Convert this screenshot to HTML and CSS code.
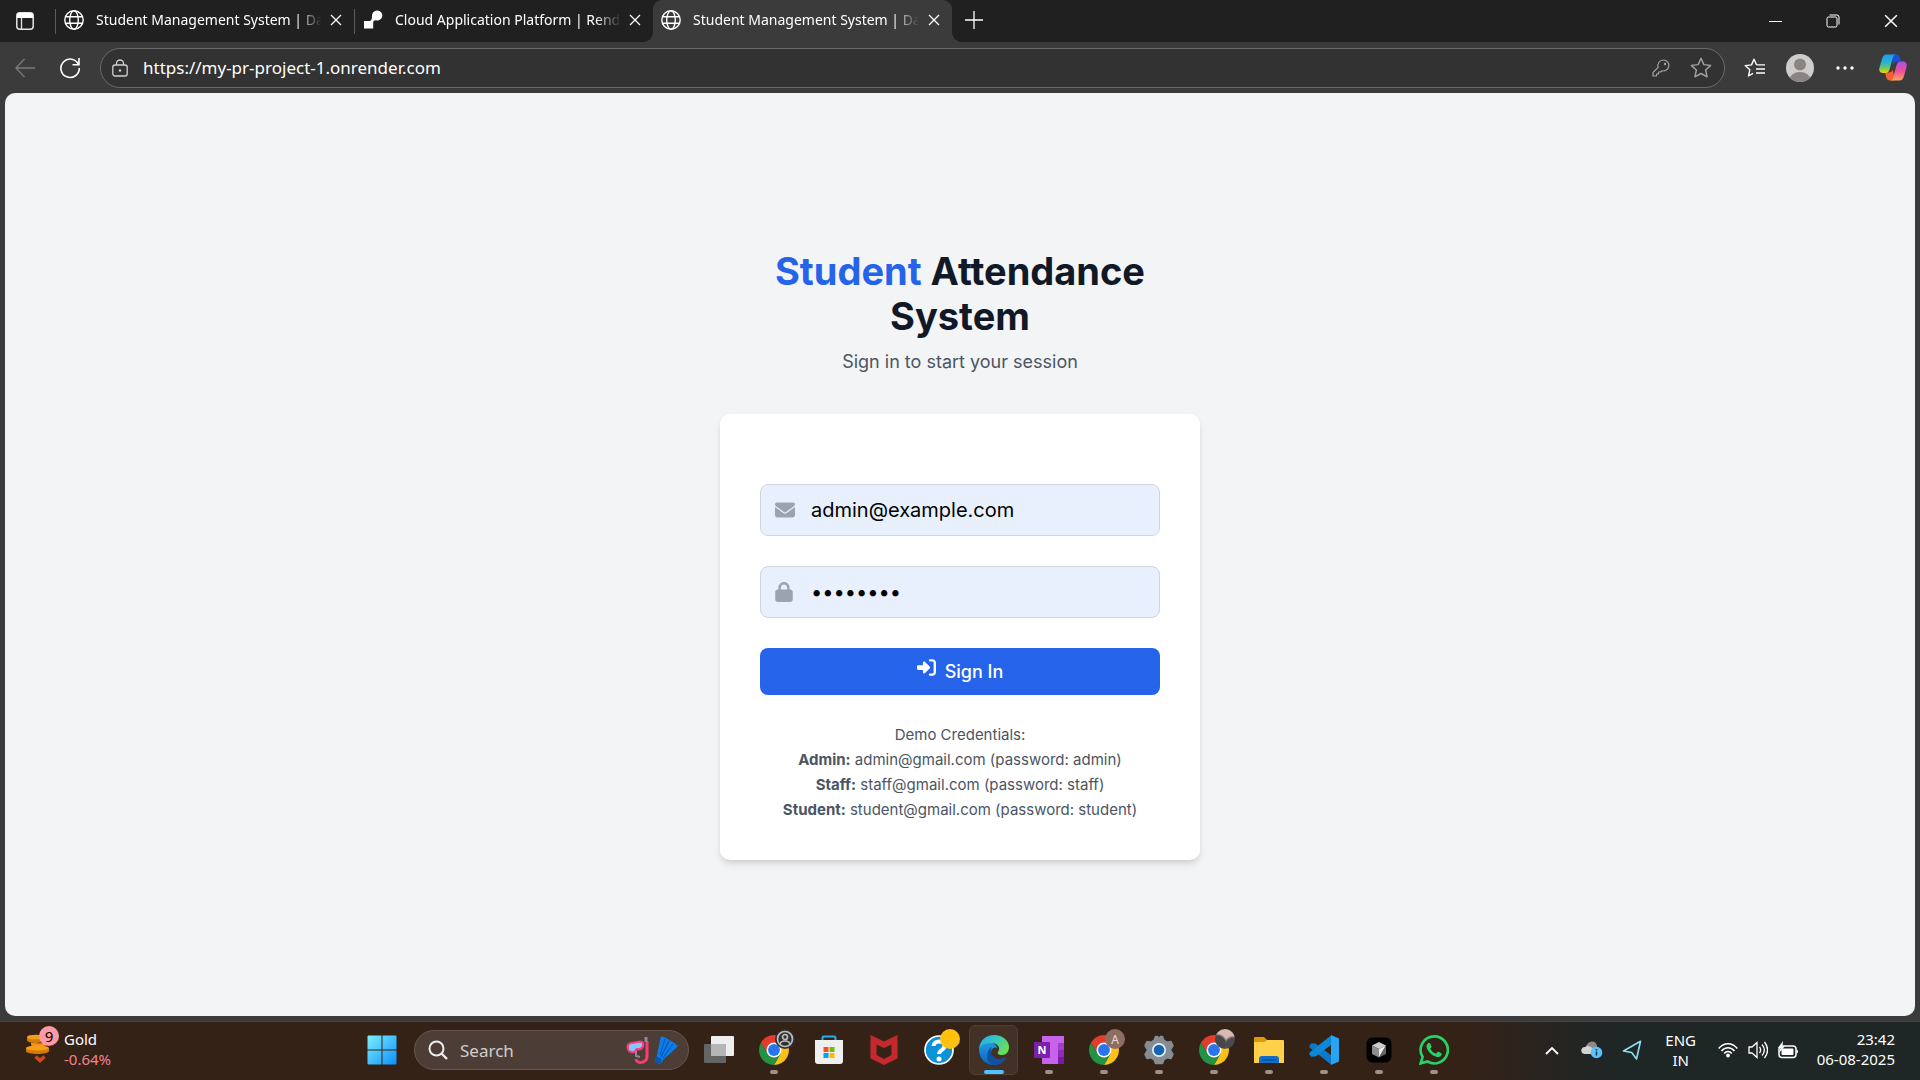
FILE: index.html
```html
<!DOCTYPE html>
<html lang="en">
<head>
<meta charset="utf-8">
<title>Student Management System</title>
<link rel="stylesheet" href="styles.css">
</head>
<body>
<svg class="defs" aria-hidden="true">
  <symbol id="globe" viewBox="0 0 20 20"><g fill="none" stroke="currentColor" stroke-width="1.4"><circle cx="10" cy="10" r="9.2"/><ellipse cx="10" cy="10" rx="4.3" ry="9.2"/><path d="M1.6 6.8h16.8M1.6 13.2h16.8"/></g></symbol>
  <symbol id="cross" viewBox="0 0 12 12"><path d="M1 1l10 10M11 1L1 11" fill="none" stroke="currentColor" stroke-width="1.3"/></symbol>
  <symbol id="chrome" viewBox="2 2 44 44"><path fill="#fbc116" d="M24 13h19.05A22 22 0 0 1 24 46l9.53-16.5z"/><path fill="#e33b2e" d="M4.95 13a22 22 0 0 1 38.1 0H24l-9.53 16.5z"/><path fill="#229342" d="M4.95 13l9.52 16.5h19.06L24 46A22 22 0 0 1 4.95 13z"/><circle cx="24" cy="24" r="11" fill="#fff"/><circle cx="24" cy="24" r="8.7" fill="#2a75ee"/></symbol>
  <symbol id="star" viewBox="0 0 20 20"><path d="M10 1.2l2.6 5.7 6.2.7-4.6 4.2 1.3 6.2L10 15l-5.5 3 1.3-6.2L1.2 7.600l6.200-.7z" fill="none" stroke="currentColor" stroke-width="1.3" stroke-linejoin="round"/></symbol>
</svg>

<div class="window">
  <header class="tabbar">
    <button class="tab-actions" aria-label="Tab actions"><svg width="18" height="18" viewBox="0 0 18 18"><rect x=".8" y=".8" width="16.400" height="16.400" rx="3" fill="none" stroke="#e6e6e6" stroke-width="1.500"/><path d="M1 3a2 2 0 0 1 2-2h12a2 2 0 0 1 2 2v3H1z" fill="#fff"/><path d="M5.500 6v11" stroke="#e6e6e6" stroke-width="1.300"/></svg></button>
    <div class="tab"><svg class="favicon"><use href="#globe"/></svg><span class="tab-title">Student Management System | Dashboard</span><button class="tab-close" aria-label="Close tab"><svg width="12" height="12"><use href="#cross"/></svg></button></div>
    <div class="tab"><svg class="favicon" viewBox="0 0 20 20"><path fill="#fff" d="M14 .5a5 5 0 1 1-1 9.800c-2 0-2.800.7-2.800 2.700v5.500H1V11h5.500C8.500 11 9 8.500 9 6a5 5 0 0 1 5-5.500z"/></svg><span class="tab-title">Cloud Application Platform | Render</span><button class="tab-close" aria-label="Close tab"><svg width="12" height="12"><use href="#cross"/></svg></button></div>
    <div class="tab active"><svg class="favicon"><use href="#globe"/></svg><span class="tab-title">Student Management System | Dashboard</span><button class="tab-close" aria-label="Close tab"><svg width="12" height="12"><use href="#cross"/></svg></button></div>
    <button class="new-tab" aria-label="New tab"><svg width="18" height="18" viewBox="0 0 18 18"><path d="M9 0v18M0 9h18" stroke="#fff" stroke-width="1.300"/></svg></button>
    <div class="controls">
      <button aria-label="Minimize"><svg width="13" height="13"><path d="M0 6.500h13" stroke="#fff"/></svg></button>
      <button aria-label="Restore"><svg width="14" height="14" viewBox="0 0 14 14"><g fill="none" stroke="#fff"><rect x="1" y="3" width="10" height="10" rx="1.500"/><path d="M3.500 1H11a2 2 0 0 1 2 2v7.500"/></g></svg></button>
      <button aria-label="Close"><svg width="14" height="14"><use href="#cross"/></svg></button>
    </div>
  </header>

  <div class="toolbar">
    <button class="tool back" aria-label="Back"><svg width="20" height="20" viewBox="0 0 20 20"><path d="M20 10H1M9.500 1L1 10l8.500 9" fill="none" stroke="currentColor" stroke-width="1.300"/></svg></button>
    <button class="tool" aria-label="Refresh"><svg width="22" height="22" viewBox="0 0 22 22"><path d="M19.500 7.500A9.200 9.200 0 1 0 20.300 11M20 1v6.700h-6.500" fill="none" stroke="currentColor" stroke-width="1.600"/></svg></button>
    <div class="address">
      <svg width="16" height="18" viewBox="0 0 16 18"><g fill="none" stroke="#d0d0d0" stroke-width="1.300"><rect x=".8" y="6" width="14.400" height="11" rx="2.200"/><path d="M4.500 6V4.500a3.500 3.500 0 0 1 7 0V6"/></g><circle cx="8" cy="11.500" r="1.200" fill="#d0d0d0"/></svg>
      <input class="url" aria-label="Address" value="https://my-pr-project-1.onrender.com">
      <button class="pill-tool" aria-label="Saved passwords"><svg width="18" height="18" viewBox="0 0 18 18"><path d="M11.500 1A5.500 5.500 0 0 0 6.200 8.300L1 13.500V17h3.500v-2h2v-2h2l1.400-1.200A5.500 5.500 0 1 0 11.500 1z" fill="none" stroke="currentColor" stroke-width="1.200" stroke-linejoin="round"/><circle cx="13" cy="5" r="1.200" fill="currentColor"/></svg></button>
      <button class="pill-tool" aria-label="Add to favorites"><svg width="22" height="22"><use href="#star"/></svg></button>
    </div>
    <button class="tool fav" aria-label="Favorites"><svg width="22" height="20" viewBox="0 0 22 20"><path d="M12.500 6.800L10 1.200 7.500 6.900l-6.300.7 4.600 4.200L4.500 18l4.500-2.600M12.500 6.900H21M12 11h9M12 15h9" fill="none" stroke="currentColor" stroke-width="1.400" stroke-linejoin="round"/></svg></button>
    <button class="tool" aria-label="Profile"><svg width="28" height="28" viewBox="0 0 28 28"><clipPath id="av"><circle cx="14" cy="14" r="14"/></clipPath><g clip-path="url(#av)"><path fill="#cfcdcb" d="M0 0h28v28H0z"/><circle cx="14" cy="10.500" r="6" fill="#8a8583"/><ellipse cx="14" cy="26" rx="10.500" ry="8" fill="#8a8583"/></g></svg></button>
    <button class="tool" aria-label="Settings and more"><svg width="18" height="4"><g fill="#fff"><circle cx="2" cy="2" r="1.700"/><circle cx="9" cy="2" r="1.700"/><circle cx="16" cy="2" r="1.700"/></g></svg></button>
    <button class="tool copilot" aria-label="Copilot"><svg width="28" height="27" viewBox="0 0 28 27">
      <linearGradient id="ca" x1="0" y1="0" x2="0" y2="1"><stop offset="0" stop-color="#1b9cf0"/><stop offset=".5" stop-color="#2fb7c8"/><stop offset=".75" stop-color="#7cc850"/><stop offset="1" stop-color="#f3d20c"/></linearGradient>
      <linearGradient id="cb" x1="0" y1="0" x2="0" y2="1"><stop offset="0" stop-color="#a552ec"/><stop offset=".5" stop-color="#ee4f9a"/><stop offset="1" stop-color="#fba35e"/></linearGradient>
      <path fill="#1a4fd8" d="M12 .5h5c2.500 0 3.200 1.500 4 4l.8 3h-3.500c-2.500 0-3.300 1-4 3.500z"/><path fill="#f4622f" d="M16 26.500h-5c-2.500 0-3.200-1.500-4-4l-.8-4h3.500c2.500 0 3.300-1 4-3z"/>
      <path fill="url(#ca)" d="M7.500.5H17c-2 0-2.700 1.500-3.400 4L10.700 15c-.8 2.500-1.700 4-4.200 4H4c-3 0-4.500-2-3.500-5.500L3 5C4 2 5 .5 7.500.5z"/><path fill="url(#cb)" d="M20.500 26.500H11c2 0 2.700-1.500 3.400-4L17.300 12c.8-2.500 1.700-4.500 4.200-4.500H24c3 0 4.500 2 3.500 5.500L25 22c-1 3-2 4.500-4.500 4.500z"/></svg></button>
  </div>

  <main class="page">
    <div class="login">
      <h1><span>Student</span> Attendance System</h1>
      <p class="lead">Sign in to start your session</p>
      <form class="card">
        <label class="field"><svg width="20" height="20" viewBox="0 0 512 512"><path fill="currentColor" d="M48 64C21.500 64 0 85.500 0 112c0 15.100 7.100 29.300 19.200 38.400L236.800 313.600c11.400 8.500 27 8.500 38.400 0L492.800 150.400c12.100-9.100 19.200-23.300 19.200-38.400c0-26.500-21.500-48-48-48H48zM0 176V384c0 35.300 28.700 64 64 64H448c35.300 0 64-28.700 64-64V176L294.400 339.200c-22.800 17.100-54 17.100-76.800 0L0 176z"/></svg><input type="email" aria-label="Email" value="admin@example.com"></label>
        <label class="field"><svg width="18" height="20" viewBox="0 0 448 512"><path fill="currentColor" d="M144 144v48H304V144c0-44.200-35.800-80-80-80s-80 35.800-80 80zM80 192V144C80 64.500 144.500 0 224 0s144 64.500 144 144v48h16c35.300 0 64 28.700 64 64V448c0 35.300-28.700 64-64 64H64c-35.300 0-64-28.700-64-64V256c0-35.300 28.700-64 64-64H80z"/></svg><input type="password" aria-label="Password" value="password"></label>
        <button type="button" class="sign-in"><svg width="19" height="19" viewBox="0 0 512 512"><path fill="currentColor" d="M217.900 105.900L340.700 228.700c7.200 7.200 11.300 17.100 11.300 27.300s-4.100 20.100-11.300 27.300L217.900 406.100c-6.400 6.400-15 9.900-24 9.900c-18.700 0-33.900-15.200-33.900-33.900l0-62.100L32 320c-17.700 0-32-14.300-32-32l0-64c0-17.700 14.300-32 32-32l128 0 0-62.100c0-18.700 15.200-33.900 33.900-33.900c9 0 17.600 3.600 24 9.900zM352 416l64 0c17.700 0 32-14.300 32-32l0-256c0-17.700-14.300-32-32-32l-64 0c-17.700 0-32-14.300-32-32s14.300-32 32-32l64 0c53 0 96 43 96 96l0 256c0 53-43 96-96 96l-64 0c-17.700 0-32-14.300-32-32s14.300-32 32-32z"/></svg>Sign In</button>
        <div class="demo">
          <p>Demo Credentials:</p>
          <p><strong>Admin:</strong> admin@gmail.com (password: admin)</p>
          <p><strong>Staff:</strong> staff@gmail.com (password: staff)</p>
          <p><strong>Student:</strong> student@gmail.com (password: student)</p>
        </div>
      </form>
    </div>
  </main>
</div>

<footer class="taskbar">
  <button class="widget">
    <span class="coins"><svg width="24" height="30" viewBox="0 0 24 30"><g fill="#d47a08"><path d="M1 3v3c0 4 16 4 18 0V3z"/><path d="M5 9v2c0 3 14 3 16 0V9z"/><path d="M0 14v3c0 4 23 4 23 0v-3z"/></g><g fill="#f79d17"><ellipse cx="10" cy="3" rx="9" ry="2.300"/><path d="M5 8.500c5 2.500 12 2.500 16 0v1.500c-3 2.500-13 2.500-16 0z"/><ellipse cx="11.500" cy="14" rx="11.500" ry="2.600"/></g><path d="M9.500 22.500l4.500 4 4.500-4" fill="none" stroke="#cf4a18" stroke-width="3.600"/></svg><span class="count">9</span></span>
    <span class="quote">Gold<span class="loss">-0.64%</span></span>
  </button>

  <nav class="apps">
    <button class="app" aria-label="Start"><svg width="30" height="30" viewBox="0 0 30 30"><linearGradient id="win" x1="0" y1="0" x2="1" y2="1"><stop offset="0" stop-color="#7cf0ff"/><stop offset="1" stop-color="#0c8ffc"/></linearGradient><path fill="url(#win)" d="M1.500.5h13v14H.5v-13a1 1 0 0 1 1-1zM15.500.5h13a1 1 0 0 1 1 1v13h-14zM.5 15.500h14v14h-13a1 1 0 0 1-1-1zM15.500 15.500h14v13a1 1 0 0 1-1 1h-13z"/></svg></button>
    <label class="search">
      <svg width="20" height="20" viewBox="0 0 20 20"><g fill="none" stroke="#ececec" stroke-width="2"><circle cx="8.500" cy="8.500" r="7"/><path d="M13.500 13.500L19 19" stroke-width="2.400"/></g></svg>
      <input type="text" aria-label="Search" placeholder="Search">
      <svg width="52" height="28" viewBox="0 0 52 28"><path d="M21 5v15c0 8-11 8-11 3" fill="none" stroke="#fb3a78" stroke-width="3"/><path d="M20 1v5" stroke="#8e86a8" stroke-width="3"/><path d="M5 7l9-1.500c3 0 4 2 3 5-1 2-3 3-5 3-1-1-2 0-2 1-2 3-7 2-8-1-1-4 0-6 3-6.500z" fill="#87c5fb" stroke="#fb3a78" stroke-width="2.200"/><path d="M10 15v5l4 1" stroke="#8d8799" stroke-width="2" fill="none"/><path fill="#0b7eea" d="M35 0l5 2 3 2 4 2 5 4-14 13-3 4c-2 2-6 0-6-3l2-5z"/><path d="M39 3l-5 16M43 5l-8 16M47 8L37 22" stroke="#0556b8" stroke-width="1.200"/><path fill="#0a54ad" d="M30 20l6 3-1 3c-2 3-7 1-6-2z"/></svg>
    </label>
    <button class="app" aria-label="Task view"><svg width="30" height="30" viewBox="0 0 30 30"><rect x="0" y="9" width="22" height="19" rx="1" fill="#646464"/><rect x="7" y="1" width="23" height="20" rx="1" fill="#eee"/><path fill="#b5b5b5" d="M7 9h15v12H7z"/></svg></button>
    <button class="app open" aria-label="Chrome"><svg width="30" height="30"><use href="#chrome"/></svg><span class="badge dark"><svg width="18" height="18" viewBox="0 0 18 18"><g fill="none" stroke="#bdbdbd" stroke-width="1.700"><circle cx="9" cy="9" r="7.500"/><circle cx="9" cy="7" r="2.500"/><path d="M4 14c1-4 9-4 10 0"/></g></svg></span></button>
    <button class="app" aria-label="Microsoft Store"><svg width="30" height="30" viewBox="0 0 30 30"><path d="M8.500 6V3a1.500 1.500 0 0 1 1.500-1.500h10A1.500 1.500 0 0 1 21.500 3v3" fill="none" stroke="#23b1ee" stroke-width="2"/><path fill="#efefef" d="M1 5h28v21a3 3 0 0 1-3 3H4a3 3 0 0 1-3-3z"/><path fill="#f25022" d="M9.500 12h5v5h-5z"/><path fill="#7fba00" d="M15.500 12h5v5h-5z"/><path fill="#00a4ef" d="M9.500 18h5v5h-5z"/><path fill="#ffb900" d="M15.500 18h5v5h-5z"/></svg></button>
    <button class="app" aria-label="McAfee"><svg width="28" height="30" viewBox="0 0 28 30"><path fill="#c5282d" fill-rule="evenodd" d="M.5 0L14 6.500 27.500 0v23.500L14 30 .5 23.500zM6.500 9.500v10.500l7.500 4 7.500-4V9.500L14 13z"/></svg></button>
    <button class="app" aria-label="Help"><svg width="30" height="30" viewBox="0 0 30 30"><circle cx="15" cy="15" r="14" fill="#0b93d8" stroke="#fff" stroke-width="1.700"/><path d="M9.500 11c0-6 11-6 11 0 0 4-5.500 4-5.500 8" fill="none" stroke="#fff" stroke-width="4"/><circle cx="15" cy="24" r="2.500" fill="#fff"/></svg><span class="badge amber"></span></button>
    <button class="app current" aria-label="Edge"><svg width="30" height="30" viewBox="0 0 30 30"><linearGradient id="e1" x1="0" y1="0" x2="1" y2=".5"><stop offset="0" stop-color="#27a9e6"/><stop offset=".5" stop-color="#35c4c8"/><stop offset="1" stop-color="#66e05a"/></linearGradient><linearGradient id="e2" x1="0" y1="0" x2="0" y2="1"><stop offset="0" stop-color="#1b9de2"/><stop offset="1" stop-color="#0b63c5"/></linearGradient><path fill="url(#e2)" d="M0 14C2 8 8 6 13 8c3 1 5 3 5 5-3-2-7 2-6 7 1 6 8 9 14 4-3 4-7 6-11 6C6 30 0 23 0 14z"/><path fill="#11509f" d="M13 12c-3 5 0 11 6 12 4 .5 7-2 8.500-2-2 5-7 8-12 8C6 29 6 16 13 12z"/><path fill="url(#e1)" d="M0 14C1 5 7 0 15 0c9 0 15 6 15 12 0 5-3 8-7 8-4 0-5-2-4-3 3-4 0-9-7-9C6 8 2 10 0 14z"/></svg></button>
    <button class="app open" aria-label="OneNote"><svg width="30" height="30" viewBox="0 0 30 30"><path fill="#c962ea" d="M8 1h22v28H8z"/><path fill="#a63bd0" d="M24 8h6v7h-6z"/><path fill="#8f2bbd" d="M24 15h6v7h-6z"/><path fill="#7719aa" d="M24 22h6v7h-6z"/><rect x="0" y="7" width="16" height="16" rx="1" fill="#7a1fae"/><text x="8" y="19" text-anchor="middle" class="glyph">N</text></svg></button>
    <button class="app open" aria-label="Chrome, profile A"><svg width="30" height="30"><use href="#chrome"/></svg><span class="badge brown">A</span></button>
    <button class="app open" aria-label="Settings"><svg width="30" height="30" viewBox="0 0 30 30"><path fill="#858d94" stroke="#858d94" stroke-width="1.500" stroke-linejoin="round" d="M11.500 1.500h2l1.500 2 1.500-2h2l1.500 4 3 1.700 4-.7 2 4-2.700 4.500L29 19.500l-2 4-4-.7-3 1.700-1.500 4h-7L10 24.500l-3-1.700-4 .7-2-4L3.700 15 1 10.500l2-4 4 .7 3-1.700z"/><circle cx="15" cy="15" r="7" fill="#e9eef2"/><circle cx="15" cy="15" r="5.300" fill="#1464b4"/></svg></button>
    <button class="app open" aria-label="Chrome, second profile"><svg width="30" height="30"><use href="#chrome"/></svg><span class="badge photo"></span></button>
    <button class="app open" aria-label="File Explorer"><svg width="30" height="28" viewBox="0 0 30 28"><path fill="#dd9b0a" d="M0 2a1 1 0 0 1 1-1h9l3 3v3H0z"/><path fill="#ffd04a" d="M0 6h11l2-2h16a1 1 0 0 1 1 1v22H0z"/><path fill="#0f6fc8" d="M5 27v-4a3 3 0 0 1 3-3h14a3 3 0 0 1 3 3v4z"/><path d="M8 24h14" stroke="#0a4a91" stroke-width="1.200"/></svg></button>
    <button class="app open" aria-label="Visual Studio Code"><svg width="30" height="30" viewBox="0 0 30 30"><path fill="#0b78c8" d="M.5 10.500l2-2.200 4 .2L22 20v9.500L.5 12.500z"/><path fill="#0d87d8" d="M.5 19.500l2 2.300 4-.3L22 10V.5L.5 17.500z"/><path fill="#27a5f2" d="M22 0l8 3.500v23L22 30z"/></svg></button>
    <button class="app open" aria-label="Cursor"><svg width="26" height="26" viewBox="0 0 26 26"><rect width="25" height="25" x=".5" y=".5" rx="6" fill="#000"/><path fill="#ccc" d="M13 5l7 3.500-7 3.500-7-3.500z"/><path fill="#8d8d8d" d="M6 8.500l7 3.500v8.500L6 17z"/><path fill="#eee" d="M20 8.500L13 12v8.500z"/><path fill="#666" d="M20 8.500V17l-7 3.500z"/></svg></button>
    <button class="app open" aria-label="WhatsApp"><svg width="30" height="30" viewBox="0 0 24 24"><path fill="#25d366" d="M17.472 14.382c-.297-.149-1.758-.867-2.030-.967-.273-.099-.471-.148-.67.150-.197.297-.767.966-.940 1.164-.173.199-.347.223-.644.075-.297-.150-1.255-.463-2.390-1.475-.883-.788-1.480-1.761-1.653-2.059-.173-.297-.018-.458.130-.606.134-.133.298-.347.446-.520.149-.174.198-.298.298-.497.099-.198.050-.371-.025-.520-.075-.149-.669-1.612-.916-2.207-.242-.579-.487-.500-.669-.510-.173-.008-.371-.010-.570-.010-.198 0-.520.074-.792.372-.272.297-1.040 1.016-1.040 2.479 0 1.462 1.065 2.875 1.213 3.074.149.198 2.096 3.200 5.077 4.487.709.306 1.262.489 1.694.625.712.227 1.360.195 1.871.118.571-.085 1.758-.719 2.006-1.413.248-.694.248-1.289.173-1.413-.074-.124-.272-.198-.570-.347"/><path fill="none" stroke="#25d366" stroke-width="2.100" d="M12.200 1.100A10.800 10.800 0 0 0 2.900 17.500L1.300 22.700l5.500-1.500A10.800 10.800 0 1 0 12.200 1.100z"/></svg></button>
  </nav>

  <div class="tray">
    <button class="tray-icon" aria-label="Show hidden icons"><svg width="14" height="9" viewBox="0 0 14 9"><path d="M1 8l6-6 6 6" fill="none" stroke="#fff" stroke-width="1.900"/></svg></button>
    <button class="tray-icon" aria-label="OneDrive"><svg width="22" height="18" viewBox="0 0 22 18"><path fill="#8b8b8b" d="M5 6c1-6 10-8 11-1l2 6H5z"/><path fill="#d3d3d3" d="M4 13c-5 0-5-7 0-7 4-3 7 1 13 5v2z"/><circle cx="15.500" cy="11.500" r="5.800" fill="#5ac1fb"/><path d="M15.500 10.500v4M15.500 8v1.500" stroke="#16364a" stroke-width="1.500"/></svg></button>
    <button class="tray-icon" aria-label="Location in use"><svg width="20" height="20" viewBox="0 0 20 20"><path d="M18.500 1.200L1.500 11l8.200 1.500 4.800 6.500z" fill="none" stroke="#8de0f5" stroke-width="1.600" stroke-linejoin="round"/></svg></button>
    <button class="lang">ENG<br>IN</button>
    <button class="status" aria-label="Network, volume, battery">
      <svg width="20" height="16" viewBox="0 0 20 16"><g fill="none" stroke="#fff" stroke-width="1.500"><path d="M.7 6.500c5-6.500 13.600-6.500 18.600 0M3.500 9c3.500-4.500 9.500-4.500 13 0M6.200 11.500c2-2.700 5.600-2.700 7.600 0"/></g><circle cx="10" cy="13.500" r="1.900" fill="#fff"/></svg>
      <svg width="20" height="18" viewBox="0 0 20 18"><path d="M1 6h3l5-4.500v15L4 12H1zM11.500 6c1.500 2 1.500 4 0 6M14 3.500c3 3.500 3 7.500 0 11M16.500 1c3.800 5 3.800 11 0 16" fill="none" stroke="#fff" stroke-width="1.300"/></svg>
      <svg width="21" height="18" viewBox="0 0 21 18"><rect x="1" y="5" width="17" height="11.500" rx="3" fill="none" stroke="#fff" stroke-width="1.500"/><rect x="3.500" y="7.500" width="12" height="6.500" rx="1" fill="#fff"/><path fill="#fff" d="M18.500 8.500c2 0 2 4 0 4zM5 0L0 7h2.500L1 12l6-7H4.500z"/></svg>
    </button>
    <button class="clock">23:42<br>06-08-2025</button>
  </div>
</footer>
</body>
</html>
```

FILE: styles.css
```css
* { box-sizing: border-box; }

body {
  margin: 0;
  min-height: 100vh;
  display: flex;
  flex-direction: column;
  background: #3b3b3b;
  font-family: "Noto Sans", sans-serif;
  font-size: 15px;
  color: #fff;
}

button, input { font: inherit; color: inherit; border: 0; background: none; padding: 0; }
input { min-width: 0; outline: 0; }
button { display: flex; align-items: center; justify-content: center; }
svg { display: block; flex: none; }
h1, p { margin: 0; }
.defs { position: absolute; width: 0; height: 0; }

.window { flex: 1; display: flex; flex-direction: column; }

/* Tabs */
.tabbar { display: flex; height: 42px; background: #202020; }
.tab-actions { width: 50px; margin-right: 5px; }
.tab {
  position: relative;
  display: flex;
  align-items: center;
  width: 299px;
  padding: 0 11px 2px 9px;
}
.tab::before {
  content: "";
  position: absolute;
  left: 0;
  top: 9px;
  width: 1px;
  height: 25px;
  background: #5c5c5c;
}
.favicon { width: 20px; height: 20px; margin-right: 12px; }
.tab-title {
  flex: 1;
  overflow: hidden;
  white-space: nowrap;
  padding-bottom: 2px;
  font-size: 14px;
  mask-image: linear-gradient(to right, #000 200px, transparent 226px);
}
.tab-close { width: 14px; height: 20px; margin-left: 8px; }
.active { padding-left: 8px; background: #3b3b3b; border-radius: 9px 9px 0 0; }
.active::before, .active::after {
  content: "";
  position: absolute;
  left: auto;
  top: auto;
  bottom: 0;
  width: 10px;
  height: 10px;
}
.active::before { right: 100%; background: radial-gradient(circle at 0 0, #202020 10px, #3b3b3b 10px); }
.active::after { left: 100%; background: radial-gradient(circle at 100% 0, #202020 10px, #3b3b3b 10px); }
.new-tab { width: 44px; padding-bottom: 3px; }
.controls { display: flex; margin-left: auto; }
.controls button { width: 58px; }

/* Toolbar */
.toolbar { display: flex; align-items: center; height: 51px; padding: 0 5px 0 2px; }
.tool { width: 45px; height: 40px; }
.back { color: #7b7b7b; }
.address {
  flex: 1;
  display: flex;
  align-items: center;
  height: 40px;
  margin: 0 7px 0 8px;
  padding: 0 3px 0 11px;
  border: 1px solid #6a6a6a;
  border-radius: 20px;
  background: #323232;
}
.url { flex: 1; margin-left: 15px; font-size: 17px; }
.pill-tool { width: 40px; height: 36px; color: #a3a3a3; }
.copilot { margin-left: 3px; }

/* Login page */
.page {
  flex: 1;
  display: flex;
  align-items: center;
  justify-content: center;
  margin: 0 5px 5px;
  border-radius: 10px;
  background: #f3f4f6;
  color: #4b5563;
  font-family: Inter, sans-serif;
}
.login { width: 480px; text-align: center; }
h1 { padding: 0 40px; font-size: 38px; line-height: 45px; font-weight: 700; color: #111827; }
h1 span { color: #2563eb; }
.lead { margin: 10px 0 40px; font-size: 18px; line-height: 25px; }
.card {
  display: flex;
  flex-direction: column;
  gap: 30px;
  padding: 70px 40px 38px;
  border-radius: 10px;
  background: #fff;
  box-shadow: 0 5px 8px -1px rgb(0 0 0 / 10%), 0 3px 5px -2px rgb(0 0 0 / 10%);
}
.field {
  display: flex;
  align-items: center;
  height: 52px;
  padding: 0 14px;
  border: 1px solid #d1d5db;
  border-radius: 8px;
  background: #e8f0fe;
  color: #9ca3af;
}
.field input { flex: 1; height: 48px; font-size: 20px; color: #000; margin-left: 16px; }
.field svg[width="18"] { margin-right: 2px; }
.sign-in {
  height: 47px;
  gap: 9px;
  border-radius: 8px;
  background: #2563eb;
  color: #fff;
  font-size: 18px;
  font-weight: 500;
}
.sign-in svg { margin-bottom: 8px; }
.demo { margin-top: -3px; font-size: 15px; line-height: 25px; }

/* Taskbar */
.taskbar {
  display: grid;
  grid-template-columns: 354px auto 1fr;
  align-items: center;
  height: 59px;
  padding-bottom: 2px;
  border-top: 1px solid #4b403a;
  background: linear-gradient(to right, #352217 0 76%, #1e2626 84%);
}
.widget { justify-content: flex-start; gap: 7px; padding: 0 0 2px 26px; text-align: left; line-height: 20px; }
.coins { position: relative; width: 31px; }
.count {
  position: absolute;
  left: 13px;
  top: -8px;
  width: 20px;
  height: 20px;
  border-radius: 50%;
  background: #ff99a4;
  color: #000;
  text-align: center;
}
.quote { display: flex; flex-direction: column; }
.loss { color: #f1838c; }
.apps { display: flex; align-items: center; }
.app { position: relative; width: 55px; height: 50px; }
.current::before {
  content: "";
  position: absolute;
  inset: 0 3px;
  border: 1px solid #4d4039;
  border-radius: 6px;
  background: rgb(255 255 255 / 7%);
}
.current svg { position: relative; }
.open::after, .current::after {
  content: "";
  position: absolute;
  bottom: 1px;
  width: 8px;
  height: 4px;
  border-radius: 2px;
  background: #9c918b;
}
.current::after { width: 20px; background: #4cc2ff; }
.badge {
  position: absolute;
  top: 4px;
  right: 6px;
  display: flex;
  align-items: center;
  justify-content: center;
  width: 20px;
  height: 20px;
  border-radius: 50%;
}
.dark { background: #303030; }
.amber { background: #ffc10d; }
.brown { background: #8d6e63; color: #e6dcd8; font-size: 12px; }
.photo {
  background:
    radial-gradient(circle at 10% 75%, #45484a 35%, transparent 45%),
    radial-gradient(circle at 90% 80%, #4b4a4b 28%, transparent 40%),
    linear-gradient(#d9b9b4 55%, #8c8584);
}
.glyph { font: 700 11px "Open Sans", sans-serif; fill: #fff; }
.search {
  display: flex;
  align-items: center;
  width: 275px;
  height: 40px;
  margin: 0 2px 0 5px;
  padding: 0 10px 0 13px;
  border: 1px solid #65564f;
  border-radius: 20px;
  background: #4c3e37;
}
.search input { flex: 1; margin-left: 12px; font-size: 17px; }
.search input::placeholder { color: #d2cdca; opacity: 1; }
.tray { display: flex; align-items: center; justify-content: flex-end; padding-right: 25px; line-height: 20px; }
.tray-icon { width: 40px; height: 40px; }
.lang { width: 58px; }
.status { gap: 10px; margin: 0 18px 0 8px; }
.clock { padding-bottom: 2px; text-align: right; }
```
